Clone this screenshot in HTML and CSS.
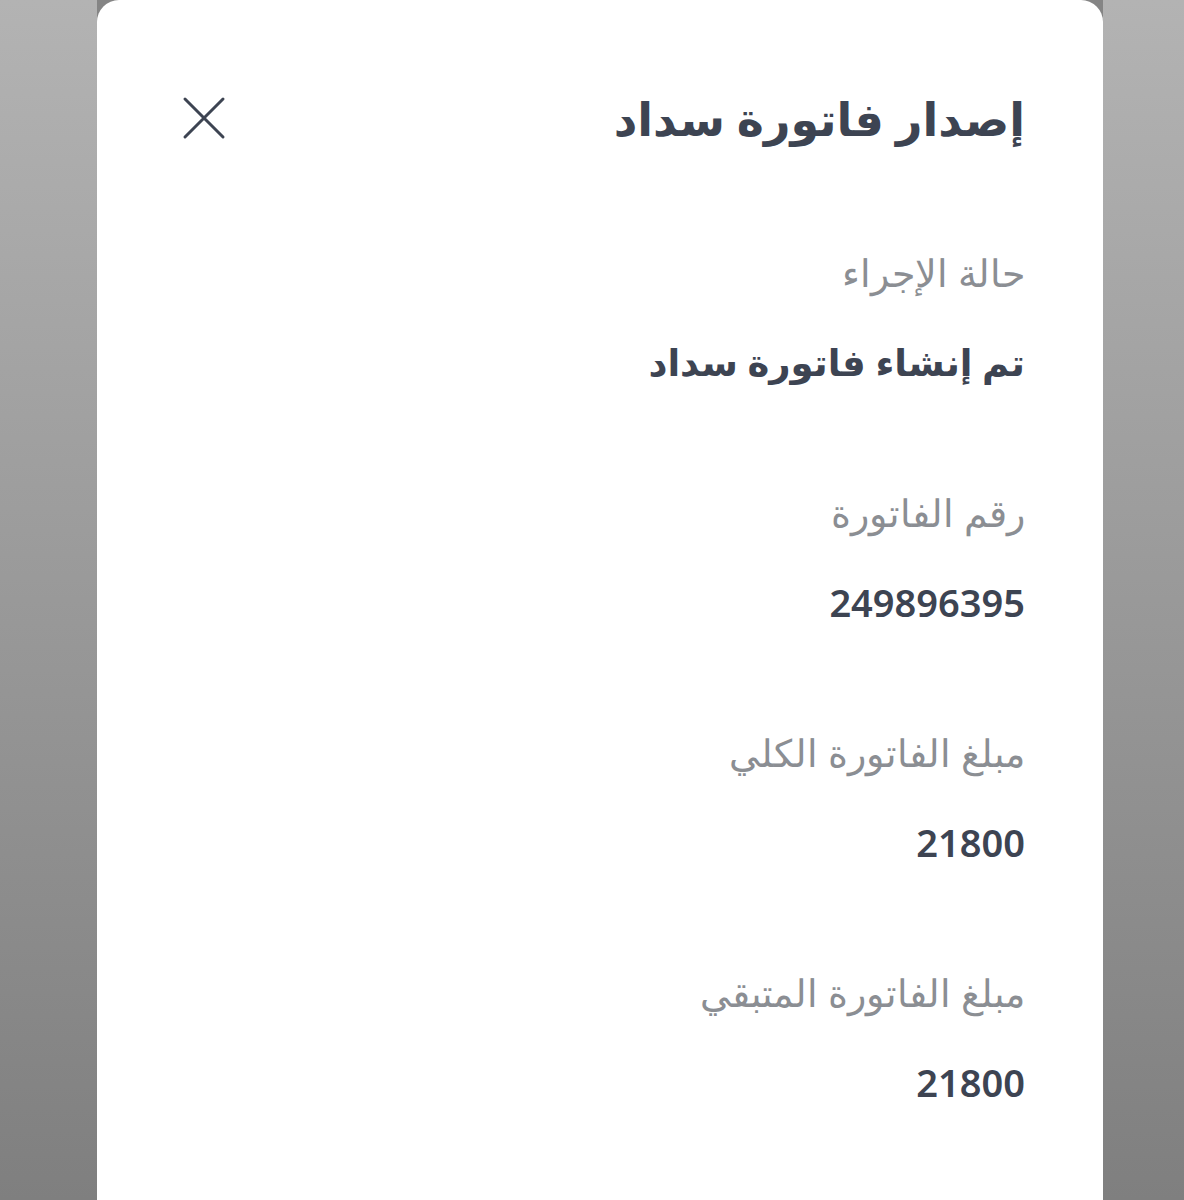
FILE: index.html
```html
<!DOCTYPE html>
<html lang="ar">
<head>
    <meta charset="UTF-8">
    <meta name="viewport" content="width=device-width, initial-scale=1.0">
    <title>إصدار فاتورة سداد</title>
    <link rel="stylesheet" href="styles.css">
</head>
<body>
    <div class="backdrop">
        <div class="sheet" dir="rtl">
            <div class="sheet-header">
                <h1 class="sheet-title">إصدار فاتورة سداد</h1>
                <button class="close-btn" aria-label="إغلاق">
                    <svg width="44" height="44" viewBox="0 0 44 44">
                        <path d="M3 3 L41 41 M41 3 L3 41" stroke="#3d4452" stroke-width="3" stroke-linecap="round" fill="none"/>
                    </svg>
                </button>
            </div>
            <div class="field">
                <div class="field-label">حالة الإجراء</div>
                <div class="field-value">تم إنشاء فاتورة سداد</div>
            </div>
            <div class="field">
                <div class="field-label">رقم الفاتورة</div>
                <div class="field-value num">249896395</div>
            </div>
            <div class="field">
                <div class="field-label">مبلغ الفاتورة الكلي</div>
                <div class="field-value num">21800</div>
            </div>
            <div class="field">
                <div class="field-label">مبلغ الفاتورة المتبقي</div>
                <div class="field-value num">21800</div>
            </div>
        </div>
    </div>
</body>
</html>
```

FILE: styles.css
```css
html, body {
    margin: 0;
    padding: 0;
}
body {
    font-family: "Noto Sans", "DejaVu Sans", sans-serif;
    background: linear-gradient(to bottom, #b3b3b3, #7f7f7f);
    height: 1200px;
    overflow: hidden;
}
.backdrop {
    margin-left: 97px;
    width: 1006px;
    height: 1200px;
    background: #858585;
}
.sheet {
    direction: rtl;
    height: 100%;
    background: #ffffff;
    border-radius: 22px 22px 0 0;
    padding: 80px 78px 0 85px;
    box-sizing: border-box;
}
.sheet-header {
    display: flex;
    align-items: center;
    justify-content: space-between;
    height: 76px;
    margin-bottom: 86px;
}
.sheet-title {
    margin: 0;
    font-size: 46px;
    font-weight: 700;
    color: #3d4452;
}
.close-btn {
    border: none;
    background: none;
    padding: 0;
    width: 44px;
    height: 44px;
    cursor: pointer;
}
.close-btn svg {
    display: block;
}
.field {
    margin-bottom: 90px;
}
.field-label {
    font-size: 38px;
    font-weight: 300;
    color: #8b8e93;
    height: 60px;
    line-height: 60px;
    margin-bottom: 30px;
}
.field-value {
    font-size: 37px;
    font-weight: 700;
    color: #3d4452;
    height: 60px;
    line-height: 60px;
}
.field-value.num {
    font-size: 38px;
    font-weight: 600;
}
```
